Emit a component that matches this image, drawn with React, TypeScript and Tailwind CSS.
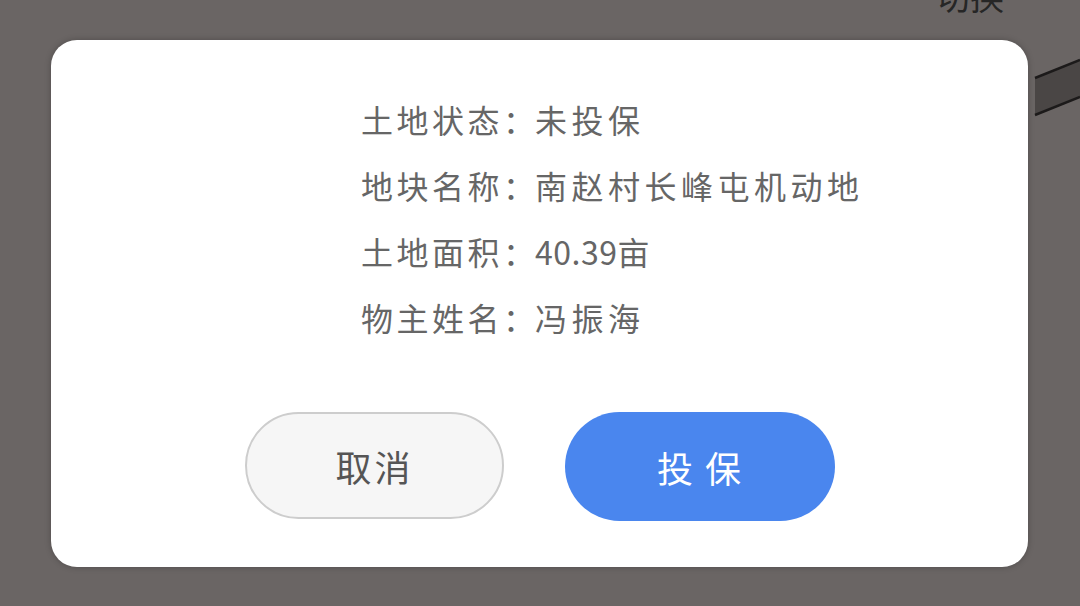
const rows = [
  { label: "土地状态", value: ["未投保"] },
  { label: "地块名称", value: ["南赵村长峰屯机动地"] },
  { label: "土地面积", value: ["", "40.39", "亩"] },
  { label: "物主姓名", value: ["冯振海"] },
];

const font = "font-['Noto_Sans_CJK_SC','Noto_Sans',sans-serif]";

export default function App() {
  return (
    <div className={`relative h-[606px] w-[1080px] overflow-hidden bg-[#6a6564] ${font}`}>
      {/* background page bits under the overlay */}
      <div className="absolute left-[936px] top-[-21px] text-[34px] leading-none text-[#262626]">切换</div>
      <svg className="absolute left-[1030px] top-[55px]" width="50" height="65" viewBox="0 0 50 65">
        <polygon points="5,23 50,5 50,42 5,60" fill="#4a4645" />
        <line x1="5" y1="23" x2="50" y2="5" stroke="#1c1a1a" strokeWidth="2.5" />
        <line x1="5" y1="60" x2="50" y2="42" stroke="#1c1a1a" strokeWidth="2.5" />
      </svg>

      <div className="relative ml-[51px] mt-[40px] h-[527px] w-[977px] rounded-[26px] bg-white shadow-[0_0_6px_rgba(0,0,0,0.25)]">
        <div className="flex flex-col pl-[310px] pt-[46px]">
          {rows.map((r) => (
            <div key={r.label} className="flex h-[66px] items-center text-[32px] text-[#666]">
              <span className="tracking-[3.5px]">{r.label}</span>
              <span>：</span>
              {r.value.length === 1 ? (
                <span className="tracking-[4.5px]">{r.value[0]}</span>
              ) : (
                <span>
                  <span className="tracking-[0.5px]">{r.value[1]}</span>
                  <span>{r.value[2]}</span>
                </span>
              )}
            </div>
          ))}
        </div>

        <div className="mt-[62px] flex gap-[61px] pl-[194px]">
          <button className="flex h-[107px] w-[259px] items-center justify-center rounded-full border-2 border-[#cdcdcd] bg-[#f6f6f6] text-[36px] tracking-[3px] text-[#555]">
            取消
          </button>
          <button className="flex h-[109px] w-[270px] items-center justify-center rounded-full bg-[#4a86ee] text-[36px] tracking-[2px] text-white">
            投 保
          </button>
        </div>
      </div>
    </div>
  );
}
